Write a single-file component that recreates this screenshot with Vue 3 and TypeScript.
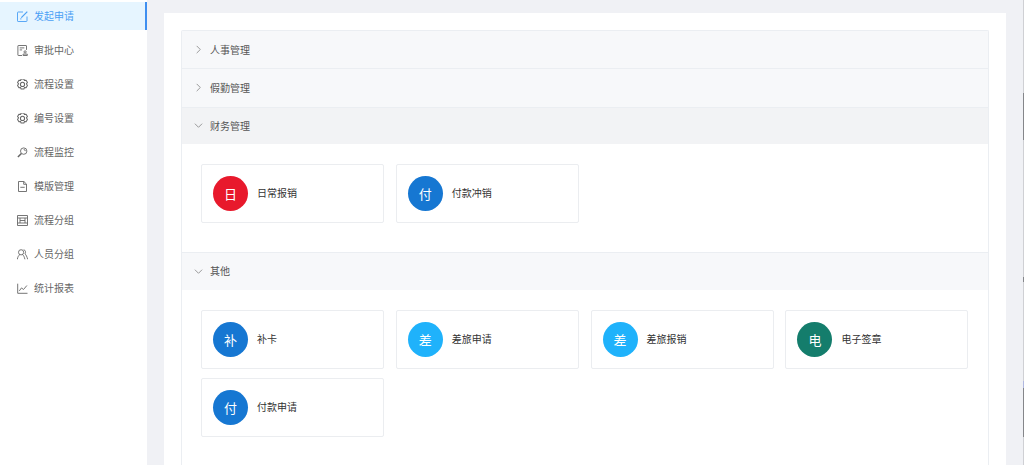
<script setup lang="ts">
interface NavItem { label: string; icon: string }
interface Tile { initial: string; label: string; color: string }
interface Group { title: string; open: boolean; tiles: Tile[] }

const nav: NavItem[] = [
  { label: '发起申请', icon: 'edit' },
  { label: '审批中心', icon: 'audit' },
  { label: '流程设置', icon: 'gear' },
  { label: '编号设置', icon: 'gear' },
  { label: '流程监控', icon: 'monitor' },
  { label: '模版管理', icon: 'file' },
  { label: '流程分组', icon: 'table' },
  { label: '人员分组', icon: 'people' },
  { label: '统计报表', icon: 'chart' },
]

const blue = '#1677d2'
const sky = '#1fb2fb'
const groups: Group[] = [
  { title: '人事管理', open: false, tiles: [] },
  { title: '假勤管理', open: false, tiles: [] },
  {
    title: '财务管理',
    open: true,
    tiles: [
      { initial: '日', label: '日常报销', color: '#e8192c' },
      { initial: '付', label: '付款冲销', color: blue },
    ],
  },
  {
    title: '其他',
    open: true,
    tiles: [
      { initial: '补', label: '补卡', color: blue },
      { initial: '差', label: '差旅申请', color: sky },
      { initial: '差', label: '差旅报销', color: sky },
      { initial: '电', label: '电子签章', color: '#147d6c' },
      { initial: '付', label: '付款申请', color: blue },
    ],
  },
]
</script>

<template>
  <div class="page">
    <aside class="side">
      <div v-for="(item, i) in nav" :key="item.label" class="nav" :class="{ active: i === 0 }">
        <svg class="nav-icon" viewBox="0.5 0.5 11 11" fill="none" stroke="currentColor" stroke-width="0.9">
          <template v-if="item.icon === 'edit'">
            <path d="M10.500 6v4.400a.6.6 0 0 1-.6.6H1.600a.6.6 0 0 1-.6-.6V2.100a.6.6 0 0 1 .6-.6H6.500" />
            <path d="M4.800 7.200 10.800 1.200" stroke-width="1.200" />
            <path d="M3.600 8.400h1.400" />
          </template>
          <template v-else-if="item.icon === 'audit'">
            <path d="M10 5.400V1.400a.4.4 0 0 0-.4-.4H1.800a.4.4 0 0 0-.4.4v9.200a.4.4 0 0 0 .4.4H5.500" />
            <path d="M3.200 3.400h4.600M3.200 5.400h2.400" />
            <circle cx="8.600" cy="7.400" r="1.100" />
            <path d="M6.600 11h4.200V9.600H6.600z" />
          </template>
          <template v-else-if="item.icon === 'gear'">
            <g transform="translate(6 6) scale(1.15) translate(-6 -5.900)">
              <path d="M4.800 1.100h2.400l.5 1.300 1.400-.2 1.200 2-.9 1.100.9 1.400-1.200 2-1.400-.2-.5 1.400H4.800l-.5-1.400-1.400.2-1.200-2 .9-1.400-.9-1.100 1.200-2 1.400.2z" stroke-linejoin="round" />
              <circle cx="6" cy="5.800" r="1.800" />
            </g>
          </template>
          <template v-else-if="item.icon === 'monitor'">
            <circle cx="7.200" cy="4.600" r="3.200" />
            <path d="M4.900 6.900 1.400 10.600" stroke-width="1.500" />
            <path d="M7.200 3a1.600 1.600 0 0 1 1.600 1.600" />
          </template>
          <template v-else-if="item.icon === 'file'">
            <path d="M2 1h5.400L10 3.600v7.400H2z" stroke-linejoin="round" />
            <path d="M7.200 1v2.800H10M3.800 6.800h4.400" />
          </template>
          <template v-else-if="item.icon === 'table'">
            <path d="M1 1h10v10H1zM1 3.500h10M1 8.500h10M3.500 3.500v5M8.500 3.500v5M3.500 6h5" />
          </template>
          <template v-else-if="item.icon === 'people'">
            <circle cx="4.600" cy="3.800" r="2.600" />
            <path d="M.8 10.800c.4-2.300 1.400-4 2.500-4.800M5.900 6c1.200.8 2 2.500 2.500 4.800" />
            <path d="M7.200 1.200c1.800.4 2.400 2.700 1.300 4.200 1.100.9 2 3 2.700 5.400" />
          </template>
          <template v-else>
            <path d="M1.200 1.200v9.600H11" />
            <path d="M2.800 8.400 5 5.400 7 7l3.400-4" />
          </template>
        </svg>
        <span class="nudge">{{ item.label }}</span>
      </div>
    </aside>

    <main class="main">
      <section class="panel">
        <div class="collapse">
          <div v-for="group in groups" :key="group.title" class="group">
            <div class="head" :class="{ open: group.open }">
              <svg class="arrow" viewBox="0 0 10 10" fill="none" stroke="currentColor" stroke-width="0.8">
                <path v-if="group.open" d="M1 3l4 4 4-4" />
                <path v-else d="M3 1l4 4-4 4" />
              </svg>
              <span class="head-label">{{ group.title }}</span>
            </div>
            <div v-if="group.open" class="body">
              <div v-for="tile in group.tiles" :key="tile.label" class="tile">
                <span class="avatar" :style="{ backgroundColor: tile.color }">{{ tile.initial }}</span>
                <span class="tile-label nudge">{{ tile.label }}</span>
              </div>
            </div>
          </div>
        </div>
      </section>
    </main>
    <div class="edge"></div>
  </div>
</template>

<style>
html, body { margin: 0; overflow: hidden; }
</style>

<style scoped>
.page {
  position: relative;
  display: flex;
  width: 1024px;
  height: 465px;
  overflow: hidden;
  background: #f0f1f5;
  font-family: "Noto Sans CJK SC", "Liberation Sans", sans-serif;
}
.side {
  flex: none;
  box-sizing: border-box;
  width: 147px;
  padding-top: 2px;
  background: #fff;
}
.nav {
  display: flex;
  align-items: center;
  gap: 6px;
  height: 28px;
  margin-bottom: 6px;
  padding-left: 17px;
  color: #666;
  font-size: 10px;
}
.nudge { margin-bottom: 2px; }
.head-label { margin-bottom: 1px; }
.nav.active {
  color: #4a9ff5;
  background: #e6f5ff;
  border-right: 2px solid #3f8ff0;
}
.nav-icon { flex: none; width: 11px; height: 11px; }
.main {
  flex: 1;
  box-sizing: border-box;
  padding: 13px 18px 0 17px;
}
.panel {
  box-sizing: border-box;
  height: 452px;
  padding: 17px;
  background: #fff;
}
.collapse {
  border: 1px solid #ebeef2;
  border-bottom: 0;
  border-radius: 2px;
}
.head {
  display: flex;
  align-items: center;
  gap: 7px;
  box-sizing: border-box;
  height: 38.300px;
  padding-left: 12px;
  color: #555;
  font-size: 10px;
  background: #f7f8fa;
  border-bottom: 1px solid #ebeef2;
}
.head.open { height: 37px; border-bottom: 0; }
.group:nth-child(3) .head { height: 36.400px; background: #f2f3f5; }
.arrow { flex: none; width: 9px; height: 9px; color: #777; }
.body {
  display: grid;
  grid-template-columns: repeat(4, 183px);
  gap: 9px 11.800px;
  padding: 20px 19.400px 29px 19px;
  background: #fff;
  border-bottom: 1px solid #ebeef2;
}
.tile {
  display: flex;
  align-items: center;
  gap: 9px;
  box-sizing: border-box;
  height: 59px;
  padding-left: 11px;
  background: #fff;
  border: 1px solid #ebedf0;
  border-radius: 2px;
}
.avatar {
  display: flex;
  align-items: center;
  justify-content: center;
  flex: none;
  width: 35px;
  height: 35px;
  border-radius: 50%;
  color: #fff;
  font-size: 13px;
}
.tile-label { color: #333; font-size: 10px; }
.edge {
  position: absolute;
  top: 0;
  right: 0;
  bottom: 0;
  width: 1px;
  background: linear-gradient(
    to bottom,
    #cfd0d4 0 93px,
    #85868a 93px 140px,
    #cfd0d4 140px 277px,
    #85868a 277px 282px,
    #cfd0d4 282px 381px,
    #b0b8e0 381px 388px,
    #85868a 388px 437px,
    #cfd0d4 437px
  );
}
</style>
